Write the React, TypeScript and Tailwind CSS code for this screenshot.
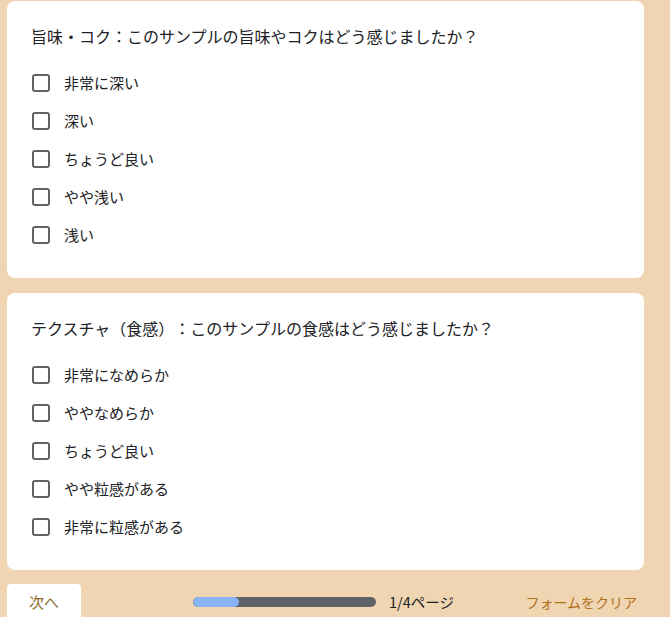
const questions = [
  {
    title: '旨味・コク：このサンプルの旨味やコクはどう感じましたか？',
    options: ['非常に深い', '深い', 'ちょうど良い', 'やや浅い', '浅い'],
  },
  {
    title: 'テクスチャ（食感）：このサンプルの食感はどう感じましたか？',
    options: ['非常になめらか', 'ややなめらか', 'ちょうど良い', 'やや粒感がある', '非常に粒感がある'],
  },
]

const font = { fontFamily: '"Noto Sans CJK JP", "Noto Sans", sans-serif' }

export default function App() {
  return (
    <div
      className="min-h-screen bg-[#efd5b1] pl-[7px] pr-[26px] pt-px overflow-hidden [text-spacing-trim:space-all]"
      style={font}
    >
      <div className="flex flex-col gap-[15px]">
        {questions.map((q) => (
          <div key={q.title} className="bg-white rounded-lg px-6 pt-6 pb-6">
            <div className="text-[16px] leading-[22px] text-[#202124]">{q.title}</div>
            <div className="mt-[17px]">
              {q.options.map((o) => (
                <label key={o} className="flex items-center h-[38px] cursor-pointer">
                  <span className="ml-px w-[18px] h-[18px] border-2 border-[#5f6368] rounded-[3px]" />
                  <span className="ml-[14px] text-[15px] text-[#202124]">{o}</span>
                </label>
              ))}
            </div>
          </div>
        ))}
      </div>

      <div className="flex items-start mt-[14px]">
        <button className="w-[74px] h-9 bg-white rounded-[4px] text-[15px] text-[#8b6a2b]">次へ</button>
        <div className="flex items-center ml-[112px] h-9">
          <div className="w-[183px] h-[10px] rounded-full bg-[#5f6368] overflow-hidden">
            <div className="w-[46px] h-full rounded-full bg-[#8ab4f8]" />
          </div>
          <span className="ml-[13px] text-[14.5px] text-[#202124]">1/4ページ</span>
        </div>
        <div className="ml-auto h-9 flex items-center pr-[7px] text-[14px] text-[#b0701e]">フォームをクリア</div>
      </div>
    </div>
  )
}
